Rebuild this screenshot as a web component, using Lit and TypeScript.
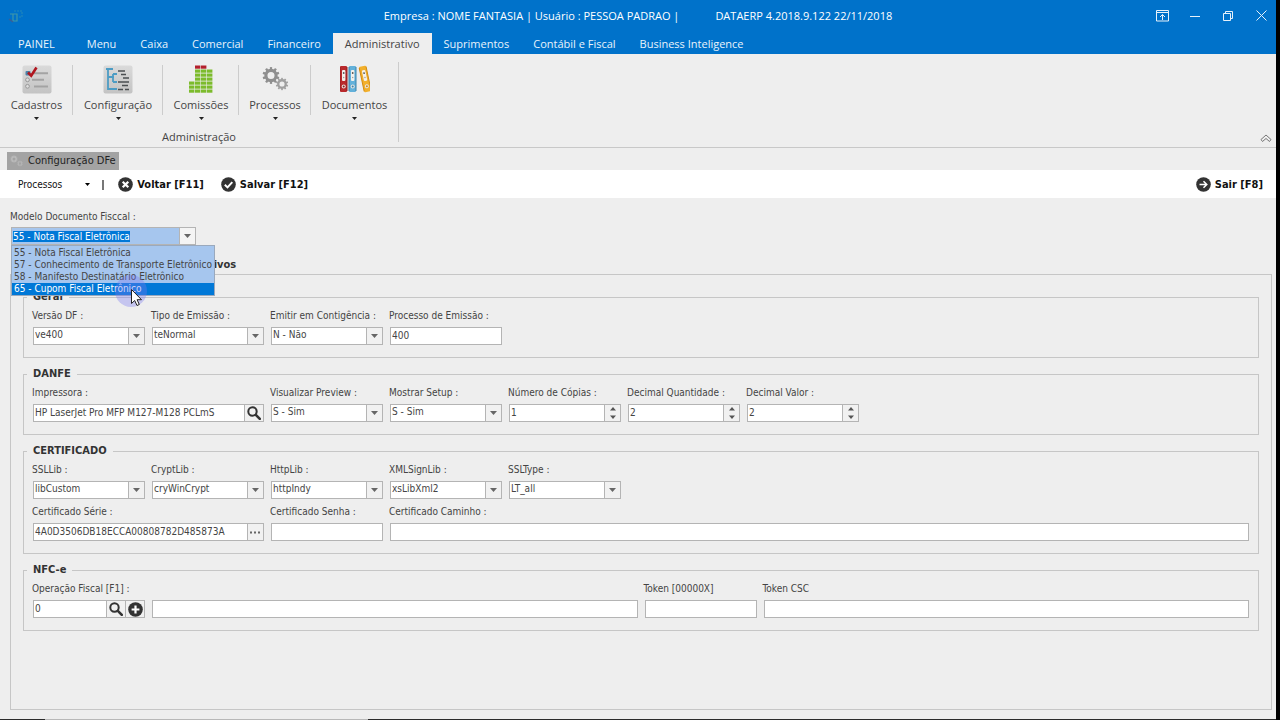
import { LitElement, html, css, svg, nothing } from "lit";
import { customElement, query, state } from "lit/decorators.js";
import { classMap } from "lit/directives/class-map.js";

const arrow = html`<svg class="arrow" width="7" height="4" viewBox="0 0 7 4"><path d="M0 0h7L3.5 4z" fill="currentColor" /></svg>`;
const magnifier = html`<svg width="14" height="14" viewBox="0 0 14 14"><circle cx="5.5" cy="5.5" r="4.2" fill="none" stroke="#333" stroke-width="2" /><path d="M8.8 8.8l4 4" stroke="#333" stroke-width="2.6" stroke-linecap="round" /></svg>`;
const plus = html`<svg width="15" height="15" viewBox="0 0 15 15"><circle cx="7.5" cy="7.5" r="7.3" fill="#333" /><path d="M7.5 3.6v7.8M3.6 7.5h7.8" stroke="#fff" stroke-width="2.2" /></svg>`;
const dots = html`<svg width="11" height="3" viewBox="0 0 11 3"><path d="M0 .5h2v2H0zM4 .5h2v2H4zM8 .5h2v2H8z" fill="#666" /></svg>`;

const round = (mark: unknown) => html`<svg width="15" height="15" viewBox="0 0 15 15">
  <circle cx="7.5" cy="7.5" r="7.3" fill="#333" />${mark}
</svg>`;

const gear = (cx: number, cy: number, r: number, fill: string) => svg`
  <g transform="translate(${cx} ${cy})">
    <circle r=${r * 0.68} fill="none" stroke=${fill} stroke-width=${r * 0.42} />
    ${[0, 36, 72, 108, 144, 180, 216, 252, 288, 324].map(
      (a) => svg`<rect x=${-r * 0.15} y=${-r * 1.12} width=${r * 0.3} height=${r * 0.34} fill=${fill} transform="rotate(${a})" />`
    )}
  </g>`;

const tile = svg`
  <defs><linearGradient id="t" x1="0" y1="0" x2="0" y2="1">
    <stop offset="0" stop-color="#dadada" /><stop offset="1" stop-color="#c3c3c3" />
  </linearGradient></defs>
  <rect x=".5" y=".5" width="29" height="28" rx="2" fill="url(#t)" />`;

const bar = (x: number, n: number) =>
  Array.from({ length: n }, (_, i) => svg`<rect x=${x} y=${24 - i * 4} width="5.4" height="3.2" fill=${i >= 6 ? "#b3202c" : "#7cbb2c"} />`);

const binder = (fill: string, dark: string) => svg`
  <rect width="7" height="26" rx="1" fill=${fill} />
  <path d="M0 1v24M7 1v24" stroke=${dark} />
  <rect x="2" y="4" width="3.4" height="11" rx="1" fill="#f4f1ec" />
  <circle cx="3.7" cy="7" r=".9" fill="#555" /><circle cx="3.7" cy="11.500" r=".7" fill="#999" />
  <circle cx="3.700" cy="20.500" r="2" fill="#e8e4e0" /><circle cx="3.700" cy="20.500" r="1" fill=${dark} />`;

const ribbonItems = [
  {
    name: "Cadastros",
    icon: svg`${tile}
      <path d="M12 8.200h14M10 14.700h12M12 21.500h14" stroke="#a3a3a3" stroke-width="2" />
      <rect x="3.500" y="6" width="5" height="4.500" rx="1" fill="#4b82a8" />
      <circle cx="5.500" cy="14.800" r="1.900" fill="#ddd" stroke="#999" /><circle cx="5.500" cy="21.300" r="1.900" fill="#ddd" stroke="#999" />
      <path d="M6 7.500l3.200 3.200L14.500 2.500" fill="none" stroke="#b0161f" stroke-width="2.600" />`,
  },
  {
    name: "Configuração",
    icon: svg`${tile}
      <path d="M3 4h7M5 4v20h4M5 12h6M10 9v8M10 17h4M8 24h6M10 9h4" fill="none" stroke="#4d9cc4" stroke-width="1.800" />
      <path d="M15 6h7M18 9.500h5M20 13h6M15 17h11M19 20.500h6M15 24.500h5M22 24.500h4" stroke="#4b4f52" stroke-width="1.600" />`,
  },
  { name: "Comissões", icon: svg`<g transform="translate(3 .5)">${bar(0, 3)}${bar(6, 7)}${bar(12, 7)}${bar(18, 6)}</g>` },
  { name: "Processos", icon: svg`${gear(11, 10.5, 7.5, "#8f8f8f")}${gear(22, 19, 5.500, "#a0a0a0")}` },
  {
    name: "Documentos",
    icon: svg`<g transform="translate(0 1)">${binder("#b92a2c", "#8e1d1d")}</g>
      <g transform="translate(9 1)">${binder("#63b1da", "#3a83ab")}</g>
      <g transform="translate(19 2) rotate(-12)">${binder("#f2b02c", "#d28a12")}</g>`,
  },
];

const menus = ["Menu", "Caixa", "Comercial", "Financeiro", "Administrativo", "Suprimentos", "Contábil e Fiscal", "Business Inteligence"];

const models = [
  "55 - Nota Fiscal Eletrônica",
  "57 - Conhecimento de Transporte Eletrônico",
  "58 - Manifesto Destinatário Eletrônico",
  "65 - Cupom Fiscal Eletrônico",
];

type Kind = "text" | "select" | "spin" | "search" | "more" | "code";
interface Field {
  id: string;
  label: string;
  kind: Kind;
  value?: string;
  size?: "double" | "grow";
}
interface Group {
  title: string;
  rows: Field[][];
}

const groups: Group[] = [
  {
    title: "Geral",
    rows: [[
      { id: "versao", label: "Versão DF :", kind: "select", value: "ve400" },
      { id: "tipo", label: "Tipo de Emissão :", kind: "select", value: "teNormal" },
      { id: "contig", label: "Emitir em Contigência :", kind: "select", value: "N - Não" },
      { id: "proc", label: "Processo de Emissão :", kind: "text", value: "400" },
    ]],
  },
  {
    title: "DANFE",
    rows: [[
      { id: "impressora", label: "Impressora :", kind: "search", value: "HP LaserJet Pro MFP M127-M128 PCLmS", size: "double" },
      { id: "preview", label: "Visualizar Preview :", kind: "select", value: "S - Sim" },
      { id: "setup", label: "Mostrar Setup :", kind: "select", value: "S - Sim" },
      { id: "copias", label: "Número de Cópias :", kind: "spin", value: "1" },
      { id: "quant", label: "Decimal Quantidade :", kind: "spin", value: "2" },
      { id: "valor", label: "Decimal Valor :", kind: "spin", value: "2" },
    ]],
  },
  {
    title: "CERTIFICADO",
    rows: [
      [
        { id: "ssllib", label: "SSLLib :", kind: "select", value: "libCustom" },
        { id: "cryptlib", label: "CryptLib :", kind: "select", value: "cryWinCrypt" },
        { id: "httplib", label: "HttpLib :", kind: "select", value: "httpIndy" },
        { id: "xmllib", label: "XMLSignLib :", kind: "select", value: "xsLibXml2" },
        { id: "ssltype", label: "SSLType :", kind: "select", value: "LT_all" },
      ],
      [
        { id: "serie", label: "Certificado Série :", kind: "more", value: "4A0D3506DB18ECCA00808782D485873A", size: "double" },
        { id: "senha", label: "Certificado Senha :", kind: "text" },
        { id: "caminho", label: "Certificado Caminho :", kind: "text", size: "grow" },
      ],
    ],
  },
  {
    title: "NFC-e",
    rows: [[
      { id: "operacao", label: "Operação Fiscal [F1] :", kind: "code", value: "0" },
      { id: "descricao", label: "", kind: "text", size: "grow" },
      { id: "token", label: "Token [00000X]", kind: "text" },
      { id: "csc", label: "Token CSC", kind: "text", size: "grow" },
    ]],
  },
];

@customElement("app-root")
export class AppRoot extends LitElement {
  static styles = css`
    :host {
      display: flex;
      box-sizing: border-box;
      min-height: 100vh;
      background: #000;
      padding-right: 4px;
      font: 10px/16px "DejaVu Sans Condensed", "DejaVu Sans", sans-serif;
      color: #444;
    }
    *, *::before, *::after { box-sizing: border-box; }
    svg { display: block; flex: none; }
    button, input, select { font: inherit; color: inherit; margin: 0; padding: 0; border: 0; border-radius: 0; background: none; outline: 0; }
    .window { flex: 1; min-width: 0; display: flex; flex-direction: column; background: #eee; }
    .edge { height: 1px; background: linear-gradient(90deg, #2b2b2b 45px, #b8b8b8 45px, #b8b8b8 368px, #2b2b2b 368px); }
    .ui { font-family: "Open Sans", "Noto Sans", sans-serif; font-size: 11px; }

    .titlebar { background: #0072ca; color: #fff; height: 33px; display: grid; grid-template-columns: 1fr auto 1fr; align-items: center; padding-bottom: 2px; }
    .appicon { margin-left: 8px; }
    .caption { display: flex; gap: 36px; white-space: pre; }
    .winbtns { display: flex; justify-content: flex-end; padding-right: 7px; gap: 17px; }
    .winbtns button { width: 16px; height: 16px; display: grid; place-items: center; color: #e6f1fa; }

    .menubar { background: #0072ca; display: flex; height: 21px; padding-left: 18px; }
    .menubar button { color: #e9f3fb; line-height: 22px; height: 21px; padding: 0 12px; white-space: nowrap; }
    .menubar .panel { padding: 0 20px 0 0; }
    .menubar .active { background: #eee; color: #444; }

    .ribbon { height: 94px; border-bottom: 1px solid #c8c8c8; display: flex; justify-content: space-between; padding-top: 8px; }
    .group { height: 80px; border-right: 1px solid #ccc; display: flex; flex-direction: column; }
    .items { display: grid; grid-template-columns: 73px 90px 76px 72px 87px; padding-top: 3px; }
    .item { height: 50px; display: flex; flex-direction: column; align-items: center; color: #444; }
    .item + .item { box-shadow: -1px 0 #ccc; }
    .item .name { margin-top: 1px; line-height: 20px; }
    .item .down { margin-top: 2px; color: #222; }
    .gtitle { text-align: center; line-height: 20px; margin-top: 12px; }
    .collapse { align-self: flex-end; margin: 0 4px 4px 0; }

    .doctabs { display: flex; padding: 4px 7px 0; height: 22px; }
    .doctab { background: #a3a3a3; color: #222; height: 18px; padding: 0 3px 0 3px; display: flex; align-items: center; gap: 4px; font-size: 11px; }
    .toolbar { background: #fff; height: 28px; display: flex; align-items: center; color: #111; padding: 1px 13px 0 18px; }
    .toolbar button { display: flex; align-items: center; gap: 4px; font-size: 11px; font-weight: bold; white-space: nowrap; }
    .toolbar .processos { font-size: 10px; font-weight: normal; gap: 23px; }
    .toolbar .rule { width: 2px; height: 10px; background: #777; margin: 0 14px 0 12px; }
    .toolbar .salvar { margin-left: 17px; }
    .toolbar .sair { margin-left: auto; }

    .content { flex: 1; display: flex; flex-direction: column; padding: 11px 4px 9px 10px; }
    .model { display: flex; flex-direction: column; gap: 2px; width: 186px; position: relative; align-self: flex-start; }
    .model > label { white-space: nowrap; }
    .box input, .box select { flex: 1; min-width: 0; width: 0; height: 16px; padding: 0 0 2px 1px; line-height: 14px; appearance: none; -moz-appearance: textfield; }
    .box input::-webkit-inner-spin-button { appearance: none; display: none; }
    .model .box { margin-left: 1px; background: #a6c6ee; }
    .model .box input { color: #fff; padding-bottom: 0; }
    .model input::selection { background: #0078d7; color: #fff; }
    .options { position: absolute; z-index: 2; left: 1px; top: 36px; width: 204px; margin: 0; padding: 1px 0 0; list-style: none; background: #a6c6ee; border: 1px solid #9aa9bd; }
    .options li { line-height: 12px; padding-left: 2px; white-space: nowrap; }
    .options .hot { background: #0078d7; color: #fff; }
    .pointer { position: absolute; z-index: 3; left: 104px; top: 65px; pointer-events: none; }
    .head { font-size: 11px; font-weight: bold; color: #333; margin: 0; padding: 12px 0 1px 177px; line-height: 16px; }
    .files { flex: 1; border: 1px solid #c6c6c6; padding: 14px 12px 12px; display: flex; flex-direction: column; gap: 8px; }

    fieldset { margin: 0; min-width: 0; border: 1px solid #c6c6c6; padding: 3px 9px 12px; }
    legend { margin-left: -6px; padding: 0 6px; font-size: 11px; font-weight: bold; color: #333; line-height: 16px; }
    .row { display: flex; gap: 7px; }
    .row + .row { margin-top: 5px; }
    .field { width: 112px; flex: none; display: flex; flex-direction: column; gap: 3px; }
    .field.double { width: 231px; }
    .field.grow { flex: 1 1 0; width: auto; min-width: 0; }
    .field label { height: 16px; margin-left: -1px; white-space: nowrap; }
    .box { height: 18px; border: 1px solid #b4b4b4; background: #fff; display: flex; }
    .combo { flex: 1; display: grid; grid-template-columns: 1fr 16px; }
    .combo select { grid-area: 1 / 1 / 2 / 3; width: 100%; }
    .combo .btn { grid-area: 1 / 2; pointer-events: none; }
    .btn { width: 16px; height: 16px; flex: none; border-left: 1px solid #b4b4b4; background: #f1f1f1; display: grid; place-items: center; color: #666; }
    .btn.wide { width: 19px; }
    .model .btn { background: #f4f4f4; }
  `;

  @state() private active = "Administrativo";
  @state() private hot = 3;
  @query("#modelo") private modelInput!: HTMLInputElement;

  firstUpdated() {
    this.modelInput.focus();
    this.modelInput.select();
  }

  private control(f: Field) {
    const v = f.value ?? "";
    switch (f.kind) {
      case "select":
        return html`<span class="combo"><select id=${f.id}><option>${v}</option></select><span class="btn">${arrow}</span></span>`;
      case "spin":
        return html`<input id=${f.id} type="number" .value=${v} /><span class="btn">
          <svg width="6" height="12" viewBox="0 0 6 12"><path d="M0 3.500L3 0l3 3.500zM0 8.500L3 12l3-3.500z" fill="#555" /></svg></span>`;
      case "search":
        return html`<input id=${f.id} .value=${v} /><button class="btn wide" aria-label="Pesquisar">${magnifier}</button>`;
      case "more":
        return html`<input id=${f.id} .value=${v} /><button class="btn" aria-label="Selecionar">${dots}</button>`;
      case "code":
        return html`<input id=${f.id} .value=${v} /><button class="btn wide" aria-label="Pesquisar">${magnifier}</button><button class="btn wide" aria-label="Adicionar">${plus}</button>`;
      default:
        return html`<input id=${f.id} .value=${v} aria-label=${f.label ? nothing : "Descrição"} />`;
    }
  }

  render() {
    return html`
      <div class="window">
        <header class="titlebar ui">
          <svg class="appicon" width="16" height="16" viewBox="0 0 16 16" fill="none">
            <path d="M2 6h7v7H5V6" stroke="#3f97a8" stroke-width="1.200" /><path d="M6 3h8v6h-4" stroke="#2488b8" stroke-dasharray="2 1" /><path d="M1 11l4 3" stroke="#3a5f96" stroke-width="1.500" />
          </svg>
          <div class="caption"><span>Empresa : NOME FANTASIA | Usuário : PESSOA PADRAO |</span><span>DATAERP 4.2018.9.122 22/11/2018</span></div>
          <div class="winbtns">
            <button aria-label="Faixa"><svg width="13" height="12" viewBox="0 0 13 12" fill="none" stroke="currentColor"><path d="M.5.5h12v10.500H.5zM.5 2.500h12M6.500 10V4.500M4 7l2.500-2.500L9 7" /></svg></button>
            <button aria-label="Minimizar"><svg width="10" height="2" viewBox="0 0 10 2"><path d="M0 1.500h10" stroke="currentColor" /></svg></button>
            <button aria-label="Restaurar"><svg width="10" height="10" viewBox="0 0 10 10" fill="none" stroke="currentColor"><path d="M.5 2.500h7v7h-7zM2.500 2.500v-2h7v7h-2" /></svg></button>
            <button aria-label="Fechar"><svg width="11" height="11" viewBox="0 0 11 11"><path d="M.5.5l10 10M10.500.5l-10 10" stroke="currentColor" /></svg></button>
          </div>
        </header>
        <nav class="menubar ui">
          <button class="panel">PAINEL</button>
          ${menus.map((m) => html`<button class=${classMap({ active: m === this.active })} @click=${() => (this.active = m)}>${m}</button>`)}
        </nav>
        <section class="ribbon ui">
          <div class="group">
            <div class="items">
              ${ribbonItems.map(
                (i) => html`<button class="item"><svg width="30" height="29" viewBox="0 0 30 29">${i.icon}</svg><span class="name">${i.name}</span>
                  <svg class="down" width="5" height="3" viewBox="0 0 5 3"><path d="M0 0h5L2.500 3z" fill="currentColor" /></svg></button>`
              )}
            </div>
            <div class="gtitle">Administração</div>
          </div>
          <button class="collapse" aria-label="Recolher"><svg width="12" height="9" viewBox="0 0 12 9" fill="none" stroke="#777"><path d="M1 5.500L6 1l5 4.500L9.500 7.500 6 4.500 2.500 7.500z" /></svg></button>
        </section>
        <div class="doctabs">
          <button class="doctab"><svg width="14" height="12" viewBox="0 0 14 12">${gear(4, 4, 3.200, "#bcbcbc")}${gear(10, 8.500, 2.500, "#b6b6b6")}</svg>Configuração DFe</button>
        </div>
        <div class="toolbar">
          <button class="processos">Processos <svg width="5" height="3" viewBox="0 0 5 3"><path d="M0 0h5L2.500 3z" /></svg></button>
          <span class="rule"></span>
          <button>${round(svg`<path d="M4.700 4.700l5.600 5.600M10.300 4.700l-5.600 5.600" stroke="#fff" stroke-width="2.200" />`)}Voltar [F11]</button>
          <button class="salvar">${round(svg`<path d="M3.800 7.800l2.700 2.600 4.800-5.300" fill="none" stroke="#fff" stroke-width="2" />`)}Salvar [F12]</button>
          <button class="sair">${round(svg`<path d="M3.500 7.500h7M7.500 4.200l3.300 3.300-3.300 3.300" fill="none" stroke="#fff" stroke-width="1.500" />`)}Sair [F8]</button>
        </div>
        <main class="content">
          <div class="model">
            <label for="modelo">Modelo Documento Fisccal :</label>
            <div class="box"><input id="modelo" role="combobox" aria-expanded="true" aria-controls="modelos" .value=${models[0]} /><button class="btn" tabindex="-1" aria-label="Abrir">${arrow}</button></div>
            <ul class="options" id="modelos" role="listbox">
              ${models.map((m, i) => html`<li role="option" aria-selected=${i === this.hot} class=${classMap({ hot: i === this.hot })} @mouseenter=${() => (this.hot = i)}>${m}</li>`)}
            </ul>
            <svg class="pointer" width="34" height="34" viewBox="0 0 34 34">
              <circle cx="17" cy="17" r="16" fill="#7878f0" fill-opacity=".35" />
              <path d="M17.500 15.500v14l3.200-3 2.300 5 2.300-1-2.200-4.800h4.400z" fill="#fff" stroke="#222" />
            </svg>
          </div>
          <h2 class="head">Arquivos</h2>
          <section class="files">
            ${groups.map(
              (g) => html`<fieldset><legend>${g.title}</legend>
                ${g.rows.map(
                  (r) => html`<div class="row">
                    ${r.map((f) => html`<div class="field ${f.size ?? ""}"><label for=${f.id}>${f.label}</label><div class="box">${this.control(f)}</div></div>`)}
                  </div>`
                )}
              </fieldset>`
            )}
          </section>
        </main>
        <div class="edge"></div>
      </div>
    `;
  }
}
